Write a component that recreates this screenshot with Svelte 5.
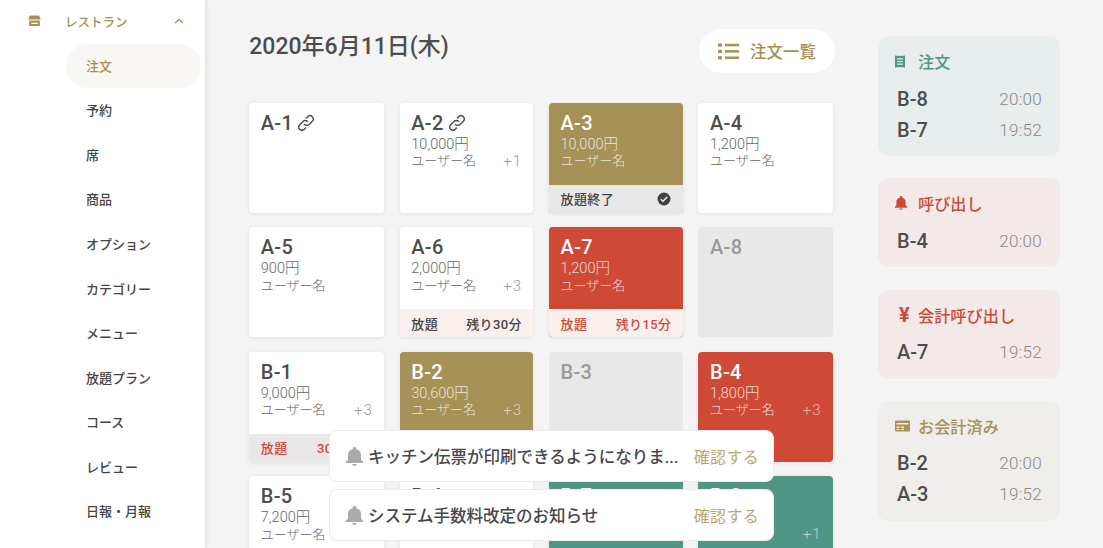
<script>
    const menu = ['注文', '予約', '席', '商品', 'オプション', 'カテゴリー', 'メニュー', '放題プラン', 'コース', 'レビュー', '日報・月報'];

    // kind: plain | gold | red | green | off
    const tables = [
        { name: 'A-1', kind: 'plain', link: true },
        { name: 'A-2', kind: 'plain', link: true, price: '10,000円', user: 'ユーザー名', extra: '+1' },
        { name: 'A-3', kind: 'gold', price: '10,000円', user: 'ユーザー名', foot: { tone: 'done', left: '放題終了', check: true } },
        { name: 'A-4', kind: 'plain', price: '1,200円', user: 'ユーザー名' },
        { name: 'A-5', kind: 'plain', price: '900円', user: 'ユーザー名' },
        { name: 'A-6', kind: 'plain', price: '2,000円', user: 'ユーザー名', extra: '+3', foot: { tone: 'soft', left: '放題', right: '残り30分' } },
        { name: 'A-7', kind: 'red', price: '1,200円', user: 'ユーザー名', foot: { tone: 'alert', left: '放題', right: '残り15分' } },
        { name: 'A-8', kind: 'off' },
        { name: 'B-1', kind: 'plain', price: '9,000円', user: 'ユーザー名', extra: '+3', foot: { tone: 'late', left: '放題', right: '30分超過' } },
        { name: 'B-2', kind: 'gold', price: '30,600円', user: 'ユーザー名', extra: '+3' },
        { name: 'B-3', kind: 'off' },
        { name: 'B-4', kind: 'red', price: '1,800円', user: 'ユーザー名', extra: '+3' },
        { name: 'B-5', kind: 'plain', price: '7,200円', user: 'ユーザー名' },
        { name: 'B-6', kind: 'plain' },
        { name: 'B-7', kind: 'green' },
        { name: 'B-8', kind: 'green', extra: '+1' }
    ];

    const panels = [
        { title: '注文', tone: 'teal', icon: 'receipt', rows: [['B-8', '20:00'], ['B-7', '19:52']] },
        { title: '呼び出し', tone: 'rose', icon: 'bell', rows: [['B-4', '20:00']] },
        { title: '会計呼び出し', tone: 'rose', icon: 'yen', rows: [['A-7', '19:52']] },
        { title: 'お会計済み', tone: 'sand', icon: 'card', rows: [['B-2', '20:00'], ['A-3', '19:52']] }
    ];

    const notices = ['キッチン伝票が印刷できるようになりま...', 'システム手数料改定のお知らせ'];
</script>

{#snippet bell(w, h)}
    <svg width={w} height={h} viewBox="3.500 1.500 17 21.500" preserveAspectRatio="none" fill="currentColor">
        <path d="M12 23c1.300 0 2.300-1 2.300-2.200H9.700C9.700 22 10.700 23 12 23zm8.500-5.200-2-2V10.200c0-3.200-1.800-5.500-4.700-6.200V3.300C13.800 2.300 13 1.500 12 1.500s-1.800.8-1.800 1.800V4c-2.900.7-4.700 3-4.700 6.200v5.600l-2 2v1.700h17v-1.700z"/>
    </svg>
{/snippet}

{#snippet link()}
    <svg class="link" width="18" height="18" viewBox="0 0 24 24" fill="none" stroke="currentColor" stroke-width="1.900" stroke-linecap="round">
        <path d="M10 14a4.300 4.300 0 0 0 6.100 0l4.300-4.300a4.300 4.300 0 0 0-6.100-6.100l-1.700 1.700"/>
        <path d="M14 10a4.300 4.300 0 0 0-6.100 0l-4.300 4.300a4.300 4.300 0 0 0 6.100 6.100l1.700-1.700"/>
    </svg>
{/snippet}

<div class="page">
    <aside class="sidebar">
        <div class="group">
            <svg class="store" width="13" height="12" viewBox="0 0 14 13" fill="currentColor">
                <path d="M2 .5h10l1.500 3.500v1H.5V4z"/>
                <path d="M1.200 6h11.600v6H1.200zM3.500 8.500v1.300h7V8.500z" fill-rule="evenodd"/>
            </svg>
            <span class="group-name">レストラン</span>
            <svg class="chev" width="10" height="6" viewBox="0 0 10 6" fill="none" stroke="currentColor" stroke-width="1.400">
                <path d="M1.200 5 5 1.400 8.800 5"/>
            </svg>
        </div>
        <nav class="menu">
            {#each menu as item, i}
                <div class="menu-item" class:active={i === 0}>{item}</div>
            {/each}
        </nav>
    </aside>

    <main class="main">
        <header class="top">
            <h1>2020年6月11日(木)</h1>
            <button class="list-btn">
                <svg width="21" height="17" viewBox="0 0 21 17" fill="currentColor">
                    <rect x="0" y="0.500" width="4" height="3.200"/><rect x="0" y="6.800" width="4" height="3.200"/><rect x="0" y="13.200" width="4" height="3.200"/>
                    <rect x="7" y="0.800" width="14" height="2.500"/><rect x="7" y="7.100" width="14" height="2.500"/><rect x="7" y="13.500" width="14" height="2.500"/>
                </svg>
                注文一覧
            </button>
        </header>

        <section class="grid">
            {#each tables as t}
                <article class="table {t.kind}">
                    <div class="body">
                        <div class="name">{t.name}{#if t.link}{@render link()}{/if}</div>
                        {#if t.price}<div class="line">{t.price}</div>{/if}
                        {#if t.user || t.extra}
                            <div class="line split" class:bare={!t.price}>
                                <span>{t.user ?? ''}</span>
                                {#if t.extra}<span class="extra">{t.extra}</span>{/if}
                            </div>
                        {/if}
                    </div>
                    {#if t.foot}
                        <div class="foot {t.foot.tone}">
                            <span>{t.foot.left}</span>
                            {#if t.foot.check}
                                <svg width="14" height="14" viewBox="0 0 14 14">
                                    <circle cx="7" cy="7" r="6.500" fill="#424242"/>
                                    <path d="M3.800 7.200 6 9.300l4.200-4.400" fill="none" stroke="#e8e8e8" stroke-width="1.500"/>
                                </svg>
                            {:else}
                                <span>{t.foot.right}</span>
                            {/if}
                        </div>
                    {/if}
                </article>
            {/each}
        </section>

        <div class="notices">
            {#each notices as n}
                <div class="notice">
                    <span class="notice-bell">{@render bell(17, 19)}</span>
                    <span class="notice-text">{n}</span>
                    <span class="notice-link">確認する</span>
                </div>
            {/each}
        </div>
    </main>

    <aside class="panels">
        {#each panels as p}
            <section class="panel {p.tone}">
                <h2>
                    <span class="panel-icon">
                        {#if p.icon === 'bell'}
                            {@render bell(12, 14)}
                        {:else if p.icon === 'receipt'}
                            <svg width="10" height="13" viewBox="0 0 10 13" fill="currentColor">
                                <path fill-rule="evenodd" d="M0 .500h1.200l.9.800.9-.8.900.8.9-.8.9.8.9-.8.900.8.900-.8H10v12H8.800l-.9-.8-.9.8-.9-.8-.9.8-.9-.8-.9.8-.9-.8-.9.8H0zM2 3.200v1.200h6V3.200zm0 2.700v1.200h6V5.900zm0 2.700v1.200h6V8.600z"/>
                            </svg>
                        {:else if p.icon === 'yen'}
                            <span class="yen">¥</span>
                        {:else}
                            <svg width="15" height="12" viewBox="0 0 15 12" fill="currentColor">
                                <path fill-rule="evenodd" d="M1 .5h13a1 1 0 0 1 1 1v9a1 1 0 0 1-1 1H1a1 1 0 0 1-1-1v-9a1 1 0 0 1 1-1zM1.500 3v1.500h12V3zm0 3.500V8h3V6.500zm4.500 0V8h3V6.500zM1.500 9v1h3V9zm4.500 0v1h3V9z"/>
                            </svg>
                        {/if}
                    </span>
                    {p.title}
                </h2>
                {#each p.rows as [name, time]}
                    <div class="panel-row">
                        <span class="panel-name">{name}</span>
                        <span class="panel-time">{time}</span>
                    </div>
                {/each}
            </section>
        {/each}
    </aside>
</div>

<style>
    :global(body) { margin: 0; background: #f4f4f4; overflow: hidden; }
    .page {
        display: flex;
        height: 548px;
        overflow: hidden;
        font-family: Roboto, "Noto Sans CJK JP", sans-serif;
        color: #444;
    }

    .sidebar {
        width: 205px;
        flex: none;
        background: #fff;
        box-shadow: 1px 0 4px rgba(0,0,0,0.1);
        padding-top: 10px;
        box-sizing: border-box;
    }
    .group { display: flex; align-items: center; height: 22px; padding-left: 28px; color: #a69156; }
    .group-name { margin-left: 24px; font-size: 12.500px; font-weight: 500; }
    .chev { margin-left: 46px; }
    .menu { margin: 12px 4px 0 66px; }
    .menu-item {
        height: 44.550px;
        box-sizing: border-box;
        display: flex;
        align-items: center;
        padding: 0 0 2px 20px;
        font-size: 13px;
        font-weight: 500;
        color: #444;
        border-radius: 22px;
    }
    .menu-item.active { height: 44px; margin-bottom: 0.550px; background: #f8f7f3; color: #a69156; }

    .main { position: relative; width: 673px; flex: none; padding: 29px 0 0 44.300px; box-sizing: border-box; }
    .top { display: flex; justify-content: space-between; align-items: flex-start; width: 585.700px; height: 73.700px; }
    h1 { margin: 4px 0 0; font-size: 23px; line-height: 27px; font-weight: 500; color: #4d4d4d; }
    .list-btn {
        display: flex;
        align-items: center;
        gap: 11px;
        width: 136px;
        height: 44px;
        padding: 0 0 0 19px;
        border: 0;
        border-radius: 22px;
        background: #fff;
        color: #a69156;
        font: 500 16.500px Roboto, "Noto Sans CJK JP", sans-serif;
    }

    .grid { display: grid; grid-template-columns: 135px 133.700px 134px 134.500px; grid-auto-rows: 110px; gap: 14.500px 15.500px; }
    .table {
        display: flex;
        flex-direction: column;
        border-radius: 4px;
        overflow: hidden;
        background: #fff;
        box-shadow: 0 1px 4px rgba(0,0,0,0.08);
    }
    .body { flex: 1; padding: 7px 11.500px 0; }
    .name { display: flex; align-items: center; gap: 4px; margin-bottom: 1px; font-size: 20px; line-height: 26px; font-weight: 500; letter-spacing: 0.3px; color: #4d4d4d; }
    .link { color: #4d4d4d; }
    .line { font-size: 14.500px; line-height: 16.500px; font-weight: 300; color: #666; }
    .split { display: flex; justify-content: space-between; font-size: 13px; }
    .split.bare { margin-top: 16.500px; }
    .extra { font-size: 15px; letter-spacing: 1px; color: #999; }

    .gold { background: #a69156; }
    .red { background: #cf4a36; }
    .green { background: #519685; }
    .off { background: #e8e8e8; box-shadow: none; }
    .gold .name, .red .name, .green .name { color: #fff; }
    .gold .line, .red .line, .green .line { color: rgba(255,255,255,0.8); }
    .gold .extra, .red .extra, .green .extra { color: rgba(255,255,255,0.6); }
    .off .name { color: #999; }

    .foot {
        height: 28px;
        flex: none;
        display: flex;
        justify-content: space-between;
        align-items: center;
        padding: 0 11.500px;
        font-size: 13px;
        font-weight: 500;
        letter-spacing: 0.4px;
        color: #444;
    }
    .done { background: #e8e8e8; }
    .soft { background: #f9f0ee; }
    .alert { background: #f9f0ee; color: #cf4a36; }
    .late { background: #e8e8e8; color: #cf4a36; }

    .notices { position: absolute; left: 124px; top: 430px; display: flex; flex-direction: column; gap: 7px; }
    .notice {
        display: flex;
        align-items: center;
        width: 445px;
        height: 52px;
        box-sizing: border-box;
        padding: 0 14px 0 16px;
        background: #fff;
        border: 1px solid #ebebeb;
        border-radius: 8px;
    }
    .notice-bell { display: flex; color: #aaa; }
    .notice-text { flex: 1; margin-left: 5px; font-size: 16.500px; font-weight: 500; color: #484848; white-space: nowrap; }
    .notice-link { font-size: 16px; color: #b8a878; letter-spacing: 0.3px; }

    .panels { width: 182px; flex: none; padding-top: 36px; display: flex; flex-direction: column; gap: 22.300px; }
    .panel { border-radius: 10px; padding: 14px 18px 11px 17px; }
    .teal { background: #e8eded; color: #519685; }
    .rose { background: #f3e9e8; color: #cf4a36; }
    .sand { background: #efeeea; color: #a69156; }
    h2 { display: flex; align-items: center; margin: 0 0 11px; height: 22px; font-size: 16.200px; font-weight: 500; }
    .panel-icon { display: flex; justify-content: flex-start; width: 15px; margin-right: 8px; }
    .yen { margin-left: 4px; font-size: 20px; font-weight: 700; }
    .panel-row { display: flex; justify-content: space-between; align-items: center; height: 31px; }
    .panel-name { padding-left: 2px; font-size: 20px; font-weight: 500; color: #4d4d4d; }
    .panel-time { font-size: 17px; font-weight: 300; letter-spacing: 0.3px; color: #888; }
</style>
